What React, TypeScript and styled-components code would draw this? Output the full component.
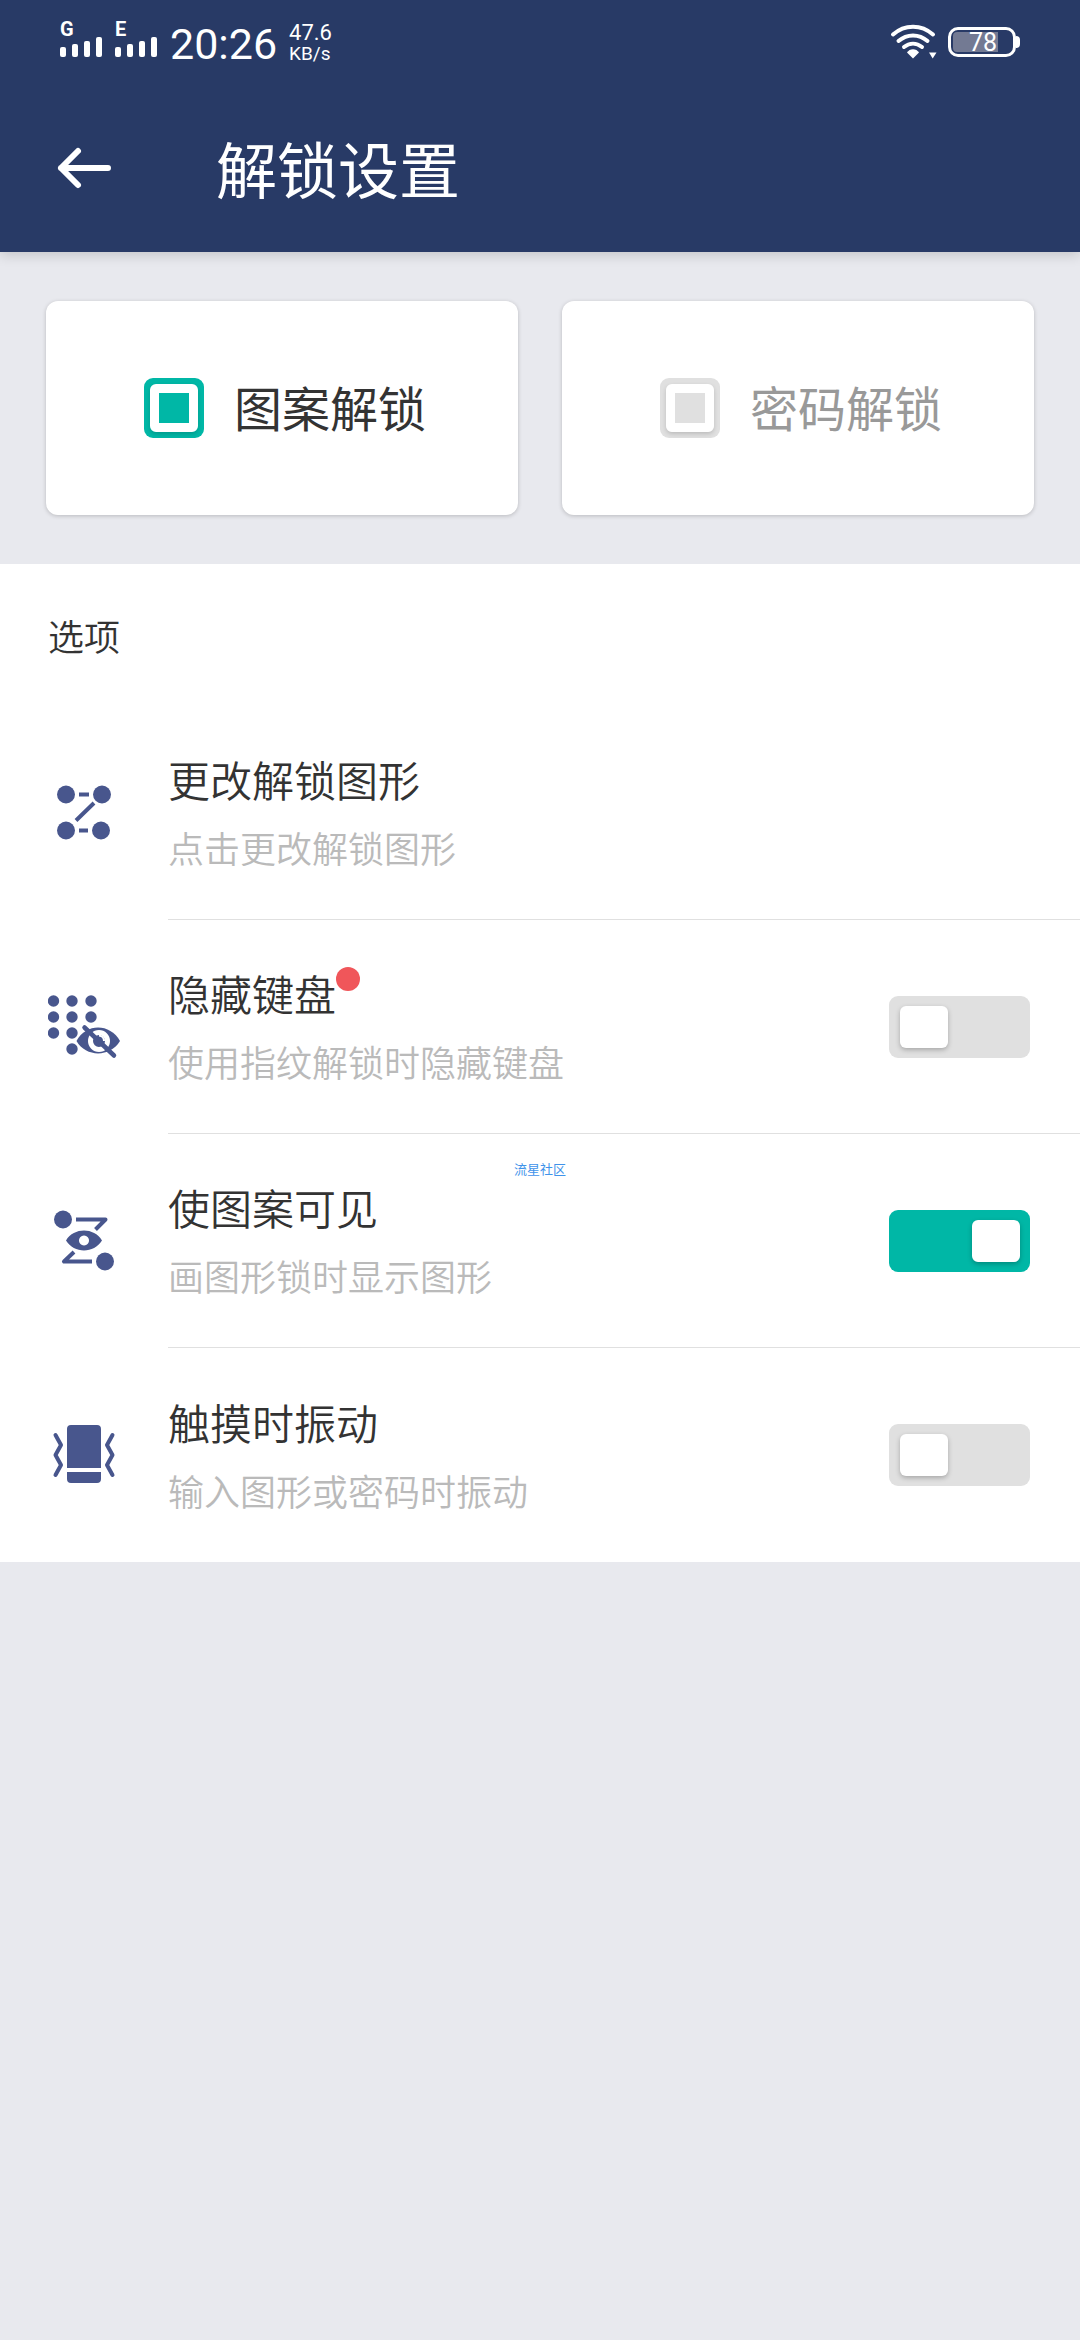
import React, { useState } from "react";
import styled, { createGlobalStyle } from "styled-components";

const color = {
  navy: "#283a66",
  canvas: "#e8e9ee",
  teal: "#00b7a6",
  idle: "#e0e0e0",
  icon: "#48568d",
  ink: "#333333",
  faint: "#bababa",
  alert: "#f0565a",
};

const GlobalStyle = createGlobalStyle`
  *, *::before, *::after { box-sizing: border-box; }
  body {
    margin: 0;
    background: ${color.canvas};
    color: ${color.ink};
    font-family: "Noto Sans CJK SC", "Noto Sans", sans-serif;
  }
  button, input { font: inherit; margin: 0; }
`;

const Page = styled.div`
  min-height: 100vh;
  background: ${color.canvas};
`;

const Header = styled.header`
  background: ${color.navy};
  color: #fff;
  box-shadow: 0 3px 12px rgba(0, 0, 0, 0.16);
`;

const StatusBar = styled.div`
  display: flex;
  align-items: center;
  justify-content: space-between;
  height: 84px;
  padding: 0 60px;
  font-family: Roboto, "Liberation Sans", sans-serif;
`;

const StatusGroup = styled.div<{ $gap: number }>`
  display: flex;
  align-items: center;
  gap: ${(p) => p.$gap}px;
`;

const SignalBox = styled.div`
  display: flex;
  flex-direction: column;
  width: 43px;
  padding-bottom: 5px;
`;

const SignalLabel = styled.span`
  font-size: 20px;
  font-weight: 700;
  line-height: 15px;
`;

const SignalBars = styled.div`
  display: flex;
  align-items: flex-end;
  gap: 6px;
  height: 20px;
`;

const SignalBar = styled.span<{ $height: number }>`
  width: 6px;
  height: ${(p) => p.$height}px;
  border-radius: 2px;
  background: #fff;
`;

const Clock = styled.time`
  padding-top: 4px;
  font-size: 43px;
  line-height: 48px;
`;

const Speed = styled.div`
  display: flex;
  flex-direction: column;
  padding-top: 2px;
  line-height: 21px;
`;

const SpeedValue = styled.span`
  font-size: 22px;
`;

const SpeedUnit = styled.span`
  font-size: 19px;
`;

const BatteryCase = styled.div`
  position: relative;
  display: flex;
  align-items: center;
  width: 68px;
  height: 30px;
  margin-right: 4px;
  padding: 2px;
  border: 3px solid #fff;
  border-radius: 10px;
  &::after {
    content: "";
    position: absolute;
    right: -7px;
    top: 6px;
    width: 4px;
    height: 12px;
    border-radius: 0 4px 4px 0;
    background: #fff;
  }
`;

const BatteryLevel = styled.span`
  width: 45px;
  height: 20px;
  padding-right: 1px;
  border-radius: 4px 0 0 4px;
  background: #737a93;
  text-align: right;
  font-size: 25px;
  line-height: 21px;
`;

const AppBar = styled.div`
  display: flex;
  align-items: center;
  gap: 96px;
  height: 168px;
  padding: 0 48px;
`;

const BackButton = styled.button`
  display: flex;
  width: 72px;
  height: 72px;
  padding: 0;
  border: 0;
  background: none;
  color: inherit;
`;

const Title = styled.h1`
  margin: 0;
  font-size: 61px;
  font-weight: 400;
  line-height: 72px;
`;

const Methods = styled.fieldset`
  display: grid;
  grid-template-columns: 1fr 1fr;
  gap: 44px;
  margin: 0;
  padding: 49px 46px;
  border: 0;
`;

const MethodCard = styled.label<{ $active: boolean }>`
  display: flex;
  align-items: center;
  justify-content: center;
  gap: 30px;
  height: 214px;
  padding-left: 6px;
  border-radius: 12px;
  background: #fff;
  box-shadow: 0 1px 4px rgba(0, 0, 0, 0.2);
  color: ${(p) => (p.$active ? color.ink : "#999999")};
  font-size: 48px;
  font-weight: 400;
`;

const MethodName = styled.span`
  padding-bottom: 4px;
  line-height: 60px;
`;

const MethodRadio = styled.input`
  appearance: none;
  display: grid;
  place-items: center;
  width: 60px;
  height: 60px;
  border-radius: 9px;
  background: ${color.idle};
  &::before {
    content: "";
    width: 48px;
    height: 48px;
    border: 9px solid #fff;
    border-radius: 6px;
    box-shadow: 0 2px 4px rgba(0, 0, 0, 0.16);
  }
  &:checked {
    background: ${color.teal};
  }
`;

const Options = styled.main`
  background: #fff;
`;

const SectionTitle = styled.h2`
  margin: 0;
  padding: 48px;
  font-size: 36px;
  font-weight: 350;
  line-height: 46px;
`;

const List = styled.ul`
  margin: 0;
  padding: 0;
  list-style: none;
`;

const Item = styled.li`
  position: relative;
  &:not(:last-child) > * > :last-child {
    border-bottom: 1px solid ${color.idle};
  }
`;

const rowLayout = `
  display: flex;
  align-items: stretch;
  gap: 48px;
  width: 100%;
  padding: 0 0 0 48px;
`;

const RowButton = styled.button`
  ${rowLayout}
  border: 0;
  background: none;
  color: inherit;
  text-align: left;
`;

const RowLabel = styled.label`
  ${rowLayout}
`;

const RowIcon = styled.svg`
  flex: none;
  align-self: center;
  width: 72px;
  height: 72px;
`;

const RowBody = styled.span`
  display: flex;
  flex: 1;
  align-items: center;
  justify-content: space-between;
  min-height: 214px;
  padding-right: 50px;
`;

const RowText = styled.span`
  display: flex;
  flex-direction: column;
  gap: 14px;
  padding-bottom: 5px;
`;

const RowTitle = styled.span`
  display: flex;
  align-items: flex-start;
  font-size: 42px;
  font-weight: 350;
  line-height: 60px;
`;

const RowHint = styled.span`
  color: ${color.faint};
  font-size: 36px;
  font-weight: 350;
  line-height: 48px;
`;

const NewDot = styled.span`
  width: 24px;
  height: 24px;
  margin-top: 4px;
  border-radius: 50%;
  background: ${color.alert};
`;

const Switch = styled.input`
  appearance: none;
  display: flex;
  align-items: center;
  width: 141px;
  height: 62px;
  padding: 0 10px 0 11px;
  border-radius: 9px;
  background: ${color.idle};
  &::before {
    content: "";
    width: 48px;
    height: 42px;
    border-radius: 6px;
    background: #fff;
    box-shadow: 0 2px 5px rgba(0, 0, 0, 0.25);
  }
  &:checked {
    justify-content: flex-end;
    background: ${color.teal};
  }
`;

const CommunityMark = styled.span`
  position: absolute;
  top: 26px;
  left: 0;
  width: 100%;
  text-align: center;
  color: #3f93ea;
  font-size: 13px;
  line-height: 18px;
  pointer-events: none;
`;

function Signal({ label }: { label: string }) {
  return (
    <SignalBox>
      <SignalLabel>{label}</SignalLabel>
      <SignalBars>
        {[10, 13, 16, 20].map((h) => (
          <SignalBar key={h} $height={h} />
        ))}
      </SignalBars>
    </SignalBox>
  );
}

const WifiIcon = () => (
  <svg width="48" height="36" viewBox="0 0 48 36" fill="none" stroke="#fff" strokeWidth="4" strokeLinecap="round" aria-hidden="true">
    <path d="M3 10.500C14.500 0 31.500 0 43 10.500" />
    <path d="M8.500 17C17 9.500 29 9.500 37.500 17" />
    <path d="M14 23C19.500 18.500 26.500 18.500 32 23" />
    <path d="M17 28.500C19.500 24 26.500 24 29 28.500L23 34.500Z" fill="#fff" stroke="none" />
    <path d="M39 28.500H46.500L42.700 34.500Z" fill="#fff" stroke="none" />
  </svg>
);

const BackIcon = () => (
  <svg width="72" height="72" viewBox="0 0 72 72" fill="none" stroke="currentColor" strokeWidth="6" strokeLinecap="round" strokeLinejoin="round" aria-hidden="true">
    <path d="M13 36H60M30 19L13 36L30 53" />
  </svg>
);

const PatternIcon = () => (
  <RowIcon viewBox="0 0 72 72" fill={color.icon} stroke={color.icon} aria-hidden="true">
    <g stroke="none">
      <circle cx="18" cy="17.500" r="9" />
      <circle cx="54" cy="17.500" r="9" />
      <circle cx="18" cy="53.500" r="9" />
      <circle cx="53" cy="53.500" r="9" />
    </g>
    <path d="M31 17.500H41M31 53.500H40M28 43.500L46 26" strokeWidth="4" />
  </RowIcon>
);

const dots = [
  [5.5, 10], [24, 10], [43, 10],
  [5.5, 26], [24, 26], [43, 26],
  [5.5, 42], [24, 42], [24, 58],
];

const HiddenKeysIcon = () => (
  <RowIcon viewBox="0 0 72 72" fill={color.icon} aria-hidden="true">
    {dots.map(([x, y]) => (
      <circle key={`${x}-${y}`} cx={x} cy={y} r="5.7" />
    ))}
    <path d="M28.500 50C38 32 62 32 72 50C62 66.500 38 66.500 28.500 50Z" />
    <circle cx="51" cy="50" r="8.500" fill="none" stroke="#fff" strokeWidth="5" />
    <path d="M51 44.500A5.500 5.500 0 0 1 56 50" fill="none" stroke="#fff" strokeWidth="2" />
    <path d="M36.500 36.500L66 64.500" stroke={color.icon} strokeWidth="4.500" strokeLinecap="round" />
  </RowIcon>
);

const VisibleIcon = () => (
  <RowIcon viewBox="0 0 72 72" fill={color.icon} aria-hidden="true">
    <circle cx="15" cy="14.500" r="9" />
    <circle cx="57" cy="56.500" r="9" />
    <path d="M28 14.500H57.500L47.500 24.500M26 47L16 56.500H44" fill="none" stroke={color.icon} strokeWidth="4" strokeLinejoin="round" />
    <path fillRule="evenodd" d="M18 35.500C26 22.300 46 22.300 54 35.500C46 48.700 26 48.700 18 35.500ZM36 30.500a5 5 0 1 0 0.010 0Z" />
  </RowIcon>
);

const VibrateIcon = () => (
  <RowIcon viewBox="0 0 72 72" fill={color.icon} aria-hidden="true">
    <path d="M19 10a4 4 0 0 1 4-4H49a4 4 0 0 1 4 4V49H19ZM19 53H53V60a4 4 0 0 1-4 4H23a4 4 0 0 1-4-4Z" />
    <path d="M7.500 16L13 26L7.500 36L13 46L7.500 56M64.500 16L59 26L64.500 36L59 46L64.500 56" fill="none" stroke={color.icon} strokeWidth="4" strokeLinecap="round" strokeLinejoin="round" />
  </RowIcon>
);

const methods = [
  { id: "pattern", label: "图案解锁" },
  { id: "password", label: "密码解锁" },
];

const toggles = [
  { id: "hide", title: "隐藏键盘", hint: "使用指纹解锁时隐藏键盘", Icon: HiddenKeysIcon, isNew: true },
  { id: "visible", title: "使图案可见", hint: "画图形锁时显示图形", Icon: VisibleIcon, mark: "流星社区" },
  { id: "vibrate", title: "触摸时振动", hint: "输入图形或密码时振动", Icon: VibrateIcon },
];

export default function App() {
  const [method, setMethod] = useState("pattern");
  const [on, setOn] = useState<Record<string, boolean>>({ visible: true });

  return (
    <Page>
      <GlobalStyle />
      <Header>
        <StatusBar>
          <StatusGroup $gap={12}>
            <Signal label="G" />
            <Signal label="E" />
            <Clock>20:26</Clock>
            <Speed>
              <SpeedValue>47.6</SpeedValue>
              <SpeedUnit>KB/s</SpeedUnit>
            </Speed>
          </StatusGroup>
          <StatusGroup $gap={10}>
            <WifiIcon />
            <BatteryCase>
              <BatteryLevel>78</BatteryLevel>
            </BatteryCase>
          </StatusGroup>
        </StatusBar>
        <AppBar>
          <BackButton type="button" aria-label="返回">
            <BackIcon />
          </BackButton>
          <Title>解锁设置</Title>
        </AppBar>
      </Header>

      <Methods>
        {methods.map((m) => (
          <MethodCard key={m.id} $active={method === m.id}>
            <MethodRadio
              type="radio"
              name="method"
              checked={method === m.id}
              onChange={() => setMethod(m.id)}
            />
            <MethodName>{m.label}</MethodName>
          </MethodCard>
        ))}
      </Methods>

      <Options>
        <SectionTitle>选项</SectionTitle>
        <List>
          <Item>
            <RowButton type="button">
              <PatternIcon />
              <RowBody>
                <RowText>
                  <RowTitle>更改解锁图形</RowTitle>
                  <RowHint>点击更改解锁图形</RowHint>
                </RowText>
              </RowBody>
            </RowButton>
          </Item>
          {toggles.map(({ id, title, hint, Icon, isNew, mark }) => (
            <Item key={id}>
              <RowLabel>
                <Icon />
                <RowBody>
                  <RowText>
                    <RowTitle>
                      {title}
                      {isNew && <NewDot />}
                    </RowTitle>
                    <RowHint>{hint}</RowHint>
                  </RowText>
                  <Switch
                    type="checkbox"
                    role="switch"
                    checked={!!on[id]}
                    onChange={(e) => setOn({ ...on, [id]: e.target.checked })}
                  />
                </RowBody>
              </RowLabel>
              {mark && <CommunityMark>{mark}</CommunityMark>}
            </Item>
          ))}
        </List>
      </Options>
    </Page>
  );
}
